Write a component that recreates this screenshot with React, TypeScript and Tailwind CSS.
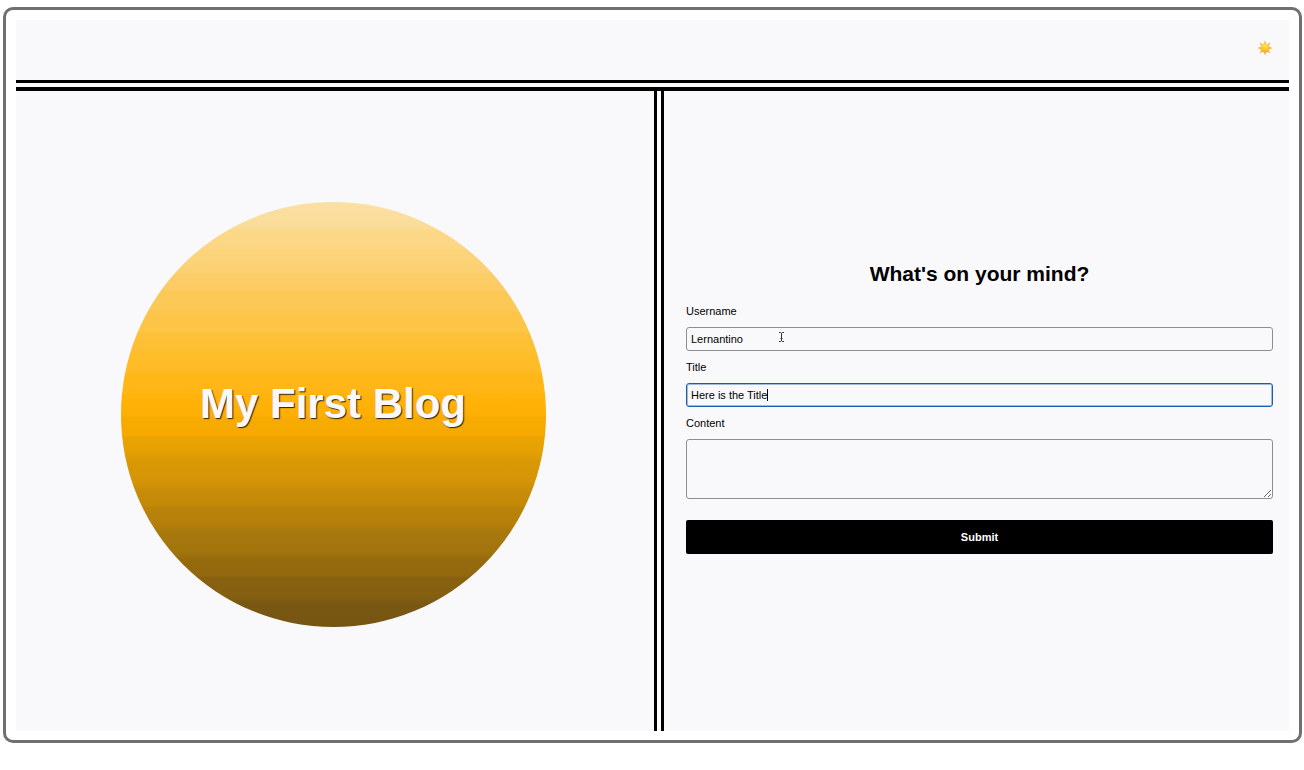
import { useState } from "react";

const labelClass = "block text-[11px] leading-4";
const fieldClass =
  "block w-full rounded-[3px] border bg-transparent px-1 text-[11px] leading-4 outline-none";

function SunIcon() {
  const rays = [0, 45, 90, 135, 180, 225, 270, 315];
  return (
    <svg viewBox="0 0 32 32" className="size-4" aria-hidden="true">
      <defs>
        <radialGradient id="sun-core" cx="50%" cy="25%" r="75%">
          <stop offset="0" stopColor="#ffe552" />
          <stop offset="0.6" stopColor="#fdc830" />
          <stop offset="1" stopColor="#f0a426" />
        </radialGradient>
      </defs>
      {rays.map((angle) => (
        <path key={angle} d="M16 0.5 L18.4 8 H13.6 Z" fill="#f3b23f" transform={`rotate(${angle} 16 16)`} />
      ))}
      <circle cx="16" cy="16" r="9" fill="url(#sun-core)" />
    </svg>
  );
}

function TextCursor() {
  return (
    <svg viewBox="0 0 7 12" className="pointer-events-none absolute top-1 left-[92px] h-3 w-[7px]" aria-hidden="true">
      <path d="M1 1.5H2.5L3.5 2.3L4.5 1.5H6M3.5 2V10M1 10.5H2.5L3.5 9.7L4.5 10.5H6M2.5 7.5H4.5" fill="none" stroke="#333" strokeWidth="1" />
    </svg>
  );
}

export default function App() {
  const [username, setUsername] = useState("Lernantino");
  const [title, setTitle] = useState("Here is the Title");
  const [content, setContent] = useState("");

  return (
    <div className="bg-white pt-[7px] pr-[2px] pb-[27px] pl-[3px] font-['Liberation_Sans',Arial,sans-serif] text-black">
      <div className="flex min-h-[calc(100vh-34px)] flex-col rounded-[10px] border-[3px] border-[#707070] px-[10px] pt-[10px] pb-[9px]">
        <header className="flex h-[60px] items-center justify-end bg-[#f9f9fc] px-4 pb-1">
          <button type="button" aria-label="Toggle theme" className="cursor-pointer">
            <SunIcon />
          </button>
        </header>
        <div className="h-[11px] border-t-[3px] border-b-[4px] border-black bg-[#f9f9fc]" />

        <main className="grid grow grid-cols-[638fr_10px_625fr] bg-[#f9f9fc]">
          <section className="flex items-center justify-center pt-[7px] pr-[4px]">
            <div className="flex aspect-square w-full max-w-[425px] items-center justify-center rounded-full bg-[linear-gradient(#fae0a4_0px,#fadc96_27px,#fcd887_28px,#fcd684_47px,#fcd47a_48px,#fcd174_68px,#fccd68_74px,#fccb62_88px,#fcc957_89px,#fcc855_109px,#fdc549_110px,#fdc445_130px,#fdc139_131px,#fdbf32_147px,#ffbd29_153px,#ffbb26_170px,#ffb819_171px,#ffb515_191px,#ffb30b_192px,#ffaf03_214px,#f8ab00_215px,#f5a800_234px,#eaa301_235px,#e5a002_250px,#d99905_258px,#d49406_280px,#c98d08_287px,#c48808_304px,#ba8309_305px,#b57f0a_322px,#a8790d_329px,#a2740d_350px,#966b0e_358px,#92680f_374px,#886110_376px,#855f11_395px,#795813_401px,#765513_425px)] pb-[22px]">
              <h1 className="text-[42px] leading-[50px] font-bold text-[#f9f9fc] [text-shadow:1px_1px_1px_#222]">
                My First Blog
              </h1>
            </div>
          </section>

          <div className="border-x-[3px] border-black bg-white" />

          <section className="flex items-center pr-4 pb-[9px] pl-[22px]">
            <form className="w-full" onSubmit={(e) => e.preventDefault()}>
              <h2 className="mb-[15px] text-center text-[21px] leading-7 font-bold">What's on your mind?</h2>

              <label htmlFor="username" className={labelClass}>Username</label>
              <div className="relative my-2">
                <input
                  id="username"
                  type="text"
                  value={username}
                  onChange={(e) => setUsername(e.target.value)}
                  className={`${fieldClass} h-6 border-[#8f8f91]`}
                />
                <TextCursor />
              </div>

              <label htmlFor="title" className={labelClass}>Title</label>
              <div className="relative my-2">
                <input
                  id="title"
                  type="text"
                  value={title}
                  onChange={(e) => setTitle(e.target.value)}
                  className={`${fieldClass} h-6 border-[#1b5fab] ring-1 ring-[#1b5fab]/40 ring-inset`}
                />
                <span className="pointer-events-none absolute top-[6px] left-[81px] h-3 w-px bg-black" />
              </div>

              <label htmlFor="content" className={labelClass}>Content</label>
              <textarea
                id="content"
                value={content}
                onChange={(e) => setContent(e.target.value)}
                className={`${fieldClass} mt-2 h-[60px] resize-y border-[#8f8f91]`}
              />

              <button
                type="submit"
                className="mt-[21px] block h-[34px] w-full rounded-[2px] bg-black text-[11px] leading-4 font-bold text-white"
              >
                Submit
              </button>
            </form>
          </section>
        </main>
      </div>
    </div>
  );
}
